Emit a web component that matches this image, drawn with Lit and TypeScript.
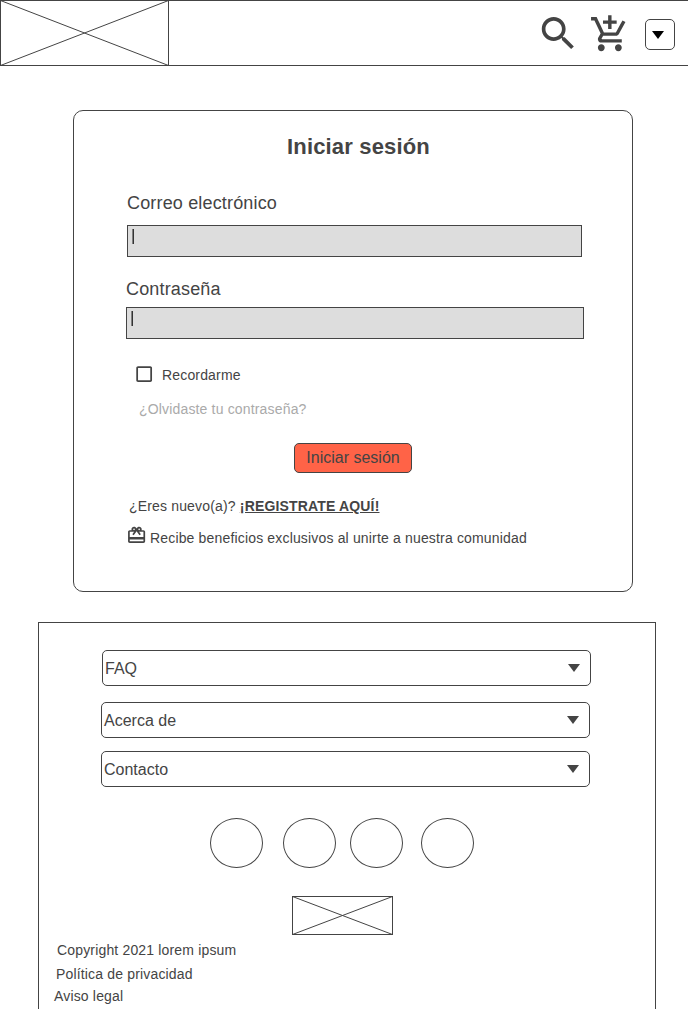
import { LitElement, html, css, svg } from "lit";
import { customElement, property } from "lit/decorators.js";

@customElement("placeholder-image")
class PlaceholderImage extends LitElement {
  @property({ type: Number }) width = 100;
  @property({ type: Number }) height = 40;

  static styles = css`
    :host { display: block; }
    svg { display: block; }
  `;

  render() {
    const w = this.width;
    const h = this.height;
    return html`<svg width=${w} height=${h} fill="none" stroke="#444">
      ${svg`<rect x=".5" y=".5" width=${w - 1} height=${h - 1}></rect>
      <path d="M.5 .5L${w - 0.5} ${h - 0.5}M.5 ${h - 0.5}L${w - 0.5} .5"></path>`}
    </svg>`;
  }
}

@customElement("accordion-row")
class AccordionRow extends LitElement {
  @property() label = "";

  static styles = css`
    :host {
      display: flex;
      align-items: center;
      justify-content: space-between;
      box-sizing: border-box;
      width: 489px;
      height: 36px;
      padding: 0 10px 0 2px;
      border: 1px solid #444;
      border-radius: 5px;
      font-size: 16px;
      line-height: 18px;
    }
    span { margin-top: 2px; }
    svg { display: block; margin-bottom: 1px; }
  `;

  render() {
    return html`<span>${this.label}</span>
      <svg width="12" height="8" fill="#444"><path d="M0 0H12L6 8Z"></path></svg>`;
  }
}

@customElement("app-root")
class AppRoot extends LitElement {
  static styles = css`
    :host {
      display: block;
      height: 1009px;
      overflow: hidden;
      background: #fff;
      color: #444;
      font-family: "Liberation Sans", Arial, sans-serif;
      font-size: 14px;
      line-height: 16px;
    }
    * { box-sizing: border-box; }
    svg { display: block; flex: none; }
    .header {
      display: flex;
      height: 66px;
      border: solid #444;
      border-width: 1px 0;
    }
    .logo { margin: -1px 0; }
    .tools {
      display: flex;
      align-items: flex-start;
      margin-left: auto;
      padding-right: 13px;
    }
    .search { margin: 10px 9px 0 0; }
    .cart { margin: 12px 14px 0 0; }
    .menu {
      display: flex;
      width: 30px;
      height: 31px;
      margin-top: 18px;
      padding: 11px 0 0 6px;
      border: 1px solid #444;
      border-radius: 5px;
    }
    .card {
      display: flex;
      flex-direction: column;
      align-items: flex-start;
      width: 560px;
      height: 482px;
      margin: 44px 0 0 73px;
      padding: 23px 48px 0 52px;
      border: 1px solid #444;
      border-radius: 10px;
      letter-spacing: 0.165px;
    }
    .title {
      margin: 0 0 0 161px;
      font-size: 22px;
      line-height: 26px;
      font-weight: 700;
      white-space: nowrap;
    }
    .label { font-size: 18px; line-height: 20px; }
    .email-label { margin: 33px 0 0 1px; }
    .pass-label { margin-top: 22px; }
    .input {
      height: 32px;
      padding: 3px 4px;
      border: 1px solid #444;
      background: #ddd;
    }
    .caret { width: 2px; height: 15px; border-left: 1px solid #808080; background: #333; background-clip: padding-box; }
    .email { width: 455px; margin: 12px 0 0 1px; }
    .pass { width: 458px; margin-top: 8px; }
    .remember {
      display: flex;
      height: 22px;
      margin: 24px 0 0 8px;
      gap: 7px;
    }
    .remember span { margin-top: 4px; }
    .forgot { margin: 16px 0 0 13px; color: #aaa; }
    .submit {
      width: 118px;
      height: 30px;
      margin: 26px 0 0 168px;
      padding: 0;
      border: 1px solid #444;
      border-radius: 5px;
      background: #ff6347;
      color: #444;
      font: 16px/18px "Liberation Sans", Arial, sans-serif;
      letter-spacing: 0;
      text-align: center;
    }
    .register { margin: 25px 0 0 3px; white-space: nowrap; }
    .link { font-weight: 700; text-decoration: underline; }
    .benefit { display: flex; margin: 11px 0 0 0.4px; gap: 3.1px; white-space: nowrap; }
    .benefit span { margin-top: 5px; }
    .footer {
      display: flex;
      flex-direction: column;
      align-items: flex-start;
      width: 618px;
      height: 420px;
      margin: 30px 0 0 38px;
      padding: 27px 0 0;
      border: 1px solid #444;
      letter-spacing: 0.165px;
    }
    .rows { display: grid; letter-spacing: 0; margin-left: 62px; }
    .faq { margin: 0 0 16px 1px; }
    .about { margin-bottom: 13px; }
    .social { display: flex; margin: 31px 0 0 171px; }
    .dot { width: 53px; height: 50px; border: 1px solid #444; border-radius: 50%; }
    .dot:nth-child(2) { margin-left: 20px; }
    .dot:nth-child(3) { margin-left: 14px; }
    .dot:nth-child(4) { margin-left: 18px; }
    .brand { margin: 28px 0 0 253px; }
    .copyright { margin: 7px 0 0 18px; }
    .privacy { margin: 8px 0 0 17px; }
    .legal { margin: 6px 0 0 15px; }
  `;

  render() {
    return html`
      <header class="header">
        <placeholder-image class="logo" .width=${169} .height=${66}></placeholder-image>
        <div class="tools">
          <svg class="search" width="44" height="44" viewBox="-0.15 -0.3 24 24" fill="#444">
            <path d="M15.5 14h-.79l-.28-.27C15.41 12.59 16 11.11 16 9.5 16 5.91 13.09 3 9.5 3S3 5.91 3 9.5 5.91 16 9.5 16c1.61 0 3.09-.59 4.23-1.57l.27.28v.79l5 4.99L20.49 19l-4.99-5zm-6 0C7.01 14 5 11.99 5 9.5S7.01 5 9.5 5 14 7.01 14 9.5 11.99 14 9.5 14z"></path>
          </svg>
          <svg class="cart" width="42" height="42" viewBox="-0.2 -0.35 24.6 24.6" fill="#444">
            <path d="M11 9h2V6h3V4h-3V1h-2v3H8v2h3v3zm-4 9c-1.1 0-1.99.9-1.99 2S5.9 22 7 22s2-.9 2-2-.9-2-2-2zm10 0c-1.1 0-1.99.9-1.99 2s.89 2 1.99 2 2-.9 2-2-.9-2-2-2zm-9.83-3.25l.03-.12.9-1.63h7.45c.75 0 1.41-.41 1.75-1.03l3.86-7.01L19.42 4h-.01l-1.1 2-2.76 5H8.53l-.13-.27L6.16 6l-.95-2-.94-2H1v2h2l3.6 7.59-1.35 2.45c-.16.28-.25.61-.25.96 0 1.1.9 2 2 2h12v-2H7.42c-.13 0-.25-.11-.25-.25z"></path>
          </svg>
          <div class="menu"><svg width="12" height="8"><path d="M0 0H12L6 8Z"></path></svg></div>
        </div>
      </header>

      <section class="card">
        <h1 class="title">Iniciar sesión</h1>
        <div class="label email-label">Correo electrónico</div>
        <div class="input email"><div class="caret"></div></div>
        <div class="label pass-label">Contraseña</div>
        <div class="input pass"><div class="caret"></div></div>
        <div class="remember">
          <svg width="21" height="21" viewBox="0.4 -0.6 24 24" fill="#444">
            <path d="M19 5v14H5V5h14m0-2H5c-1.1 0-2 .9-2 2v14c0 1.1.9 2 2 2h14c1.1 0 2-.9 2-2V5c0-1.1-.9-2-2-2z"></path>
          </svg>
          <span>Recordarme</span>
        </div>
        <div class="forgot">¿Olvidaste tu contraseña?</div>
        <button class="submit">Iniciar sesión</button>
        <div class="register">¿Eres nuevo(a)? <span class="link">¡REGISTRATE AQUÍ!</span></div>
        <div class="benefit">
          <svg width="20.5" height="20.5" viewBox="-0.4 0 24 24" fill="#444">
            <path d="M20 6h-2.18c.11-.31.18-.65.18-1 0-1.66-1.34-3-3-3-1.05 0-1.96.54-2.5 1.35l-.5.67-.5-.68C10.96 2.54 10.05 2 9 2 7.34 2 6 3.34 6 5c0 .35.07.69.18 1H4c-1.11 0-1.99.89-1.99 2L2 19c0 1.11.89 2 2 2h16c1.11 0 2-.89 2-2V8c0-1.11-.89-2-2-2zm-5-2c.55 0 1 .45 1 1s-.45 1-1 1-1-.45-1-1 .45-1 1-1zM9 4c.55 0 1 .45 1 1s-.45 1-1 1-1-.45-1-1 .45-1 1-1zm11 15H4v-2h16v2zm0-5H4V8h5.08L7 10.83 8.62 12 11 8.76l1-1.36 1 1.36L15.38 12 17 10.83 14.92 8H20v6z"></path>
          </svg>
          <span>Recibe beneficios exclusivos al unirte a nuestra comunidad</span>
        </div>
      </section>

      <footer class="footer">
        <div class="rows">
          <accordion-row class="faq" label="FAQ"></accordion-row>
          <accordion-row class="about" label="Acerca de"></accordion-row>
          <accordion-row label="Contacto"></accordion-row>
        </div>
        <div class="social">
          <div class="dot"></div><div class="dot"></div><div class="dot"></div><div class="dot"></div>
        </div>
        <placeholder-image class="brand" .width=${101} .height=${39}></placeholder-image>
        <div class="copyright">Copyright 2021 lorem ipsum</div>
        <div class="privacy">Política de privacidad</div>
        <div class="legal">Aviso legal</div>
      </footer>
    `;
  }
}
